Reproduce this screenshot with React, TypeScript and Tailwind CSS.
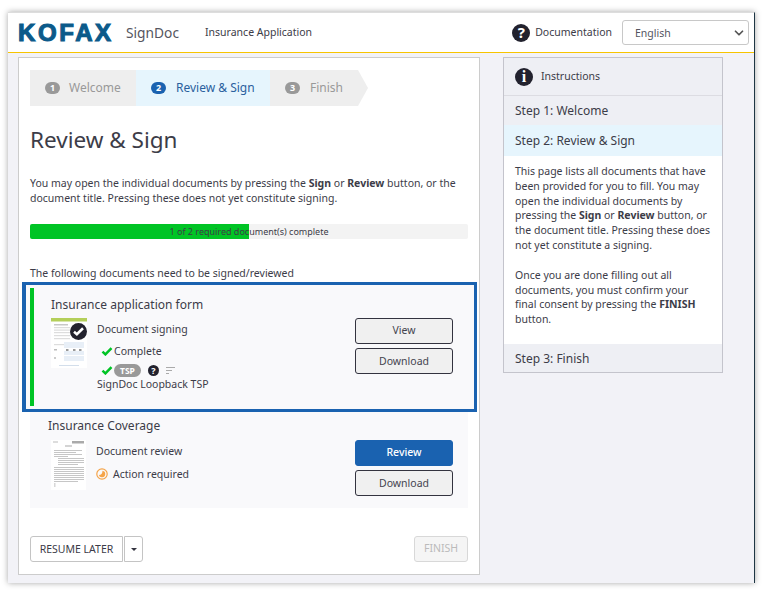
import { ChevronDown } from 'lucide-react';

const font = { fontFamily: '"Noto Sans", "Open Sans", sans-serif' };

function NumberBadge({ n, active }: { n: number; active?: boolean }) {
  return (
    <span
      className={`flex h-[12px] w-[15px] items-center justify-center rounded-full text-[9px] font-bold leading-none text-white ${
        active ? 'bg-[#1a62b0]' : 'bg-[#999999]'
      }`}
    >
      {n}
    </span>
  );
}

function Check({ className }: { className: string }) {
  return (
    <svg viewBox="0 0 12 10" className={className}>
      <path d="M1 5.2 L4.2 8.2 L11 1.2" fill="none" stroke="#00c425" strokeWidth="2.8" />
    </svg>
  );
}

function Circle({ glyph, className }: { glyph: string; className: string }) {
  return (
    <span
      className={`flex items-center justify-center rounded-full bg-[#22222e] font-bold leading-none text-white ${className}`}
    >
      {glyph}
    </span>
  );
}

function FormThumb() {
  return (
    <svg viewBox="0 0 36 50" className="h-[50px] w-[36px] shrink-0 bg-white">
      <rect x="0" y="0" width="36" height="3.5" fill="#b4cf5a" />
      <rect x="3" y="6" width="14" height="1.5" fill="#c8c8c8" />
      {[9, 11.5, 14, 17, 20, 26].map((y) => (
        <rect key={y} x="3" y={y} width="16" height="1.2" fill="#dddddd" />
      ))}
      <rect x="13" y="24" width="20" height="6" fill="#e8eff7" />
      <rect x="13" y="33" width="20" height="4" fill="#e8eff7" />
      <rect x="13" y="38" width="20" height="5" fill="#e8eff7" />
      <rect x="15" y="31" width="2.5" height="2" fill="#999" />
      <rect x="22" y="31" width="2.5" height="2" fill="#999" />
      <rect x="28" y="31" width="2.5" height="2" fill="#999" />
      <rect x="3" y="31" width="3" height="1.5" fill="#bbb" />
      <rect x="3" y="39" width="2" height="2" fill="#ccc" />
      <rect x="8" y="47" width="20" height="1" fill="#d3deeb" />
    </svg>
  );
}

function ReviewThumb() {
  const lines = [
    [3, 10, 28], [3, 12, 22], [3, 14, 28], [3, 16, 14],
    [7, 18, 26], [7, 20, 26], [7, 22, 26], [7, 24, 20],
    [3, 27, 30], [3, 29, 30], [3, 31, 30], [3, 33, 30], [3, 35, 30], [3, 37, 30], [3, 39, 30], [3, 41, 24],
  ];
  return (
    <svg viewBox="0 0 35 50" className="h-[50px] w-[35px] shrink-0 bg-white">
      <rect x="2" y="1.5" width="5" height="1" fill="#bbb" />
      <rect x="21" y="1" width="12" height="2.5" fill="#aaa" />
      <rect x="14" y="5.5" width="7" height="1" fill="#aaa" />
      {lines.map(([x, y, w]) => (
        <rect key={`${x}-${y}`} x={x} y={y} width={w} height="1" fill="#c6c6c6" />
      ))}
      <rect x="3" y="43" width="1.5" height="4" fill="#d8d8d8" />
    </svg>
  );
}

function GrayButton({ label, className }: { label: string; className?: string }) {
  return (
    <button className={`h-[26px] w-[98px] rounded-[3px] border border-[#33333f] bg-[#f0f0f0] text-[10.5px] text-[#44444f] ${className ?? ''}`}>
      {label}
    </button>
  );
}

export default function App() {
  return (
    <div className="h-[591px] w-[763px] overflow-hidden bg-white pl-[8px] pt-[12px] text-[10.5px] leading-[15px] text-[#3c3c48]" style={font}>
      <div className="flex h-[571px] w-[747px] flex-col border-t border-r border-[#dddddd] border-r-[#1e3644] bg-[#f2f2f7] shadow-[0_0_6px_rgba(0,0,0,0.35)]">
        {/* 헤더 */}
        <header className="flex h-[40px] shrink-0 items-center border-b border-[#f7c400] bg-white pl-[10px] pr-[5px]">
          <span className="w-[95px] text-[24px] font-bold leading-none tracking-[2.6px] text-[#0b5a8a] [-webkit-text-stroke:1.1px_#0b5a8a]" style={{ fontFamily: '"Liberation Sans", sans-serif' }}>
            KOFAX
          </span>
          <span className="ml-[13px] text-[13.75px] text-[#555560]">SignDoc</span>
          <span className="ml-[26px]">Insurance Application</span>
          <Circle glyph="?" className="ml-auto h-[18px] w-[18px] text-[15px]" />
          <span className="ml-[5px]">Documentation</span>
          <div className="ml-[10px] flex h-[25px] w-[127px] items-center justify-between rounded-[3px] border border-[#c8c8c8] pl-[12px] pr-[2px] pt-[1px] text-[#55555f]">
            English
            <ChevronDown size={14} strokeWidth={3} className="text-[#555]" />
          </div>
        </header>

        <div className="flex items-start pl-[10px] pt-[4px]">
          {/* 본문 패널 */}
          <main className="flex h-[518px] w-[462px] shrink-0 flex-col border border-[#cccccc] bg-white px-[11px] pt-[12px]">
            <div className="flex h-[36px] w-[338px] items-stretch text-[12px]">
              <div className="flex w-[106px] items-center gap-[9px] bg-[#eeeeee] pb-[1px] pl-[15px] text-[#999999]">
                <NumberBadge n={1} />
                Welcome
              </div>
              <div className="flex w-[134px] items-center gap-[10px] bg-[#e6f5fd] pb-[1px] pl-[15px] text-[#2a5f9e]">
                <NumberBadge n={2} active />
                Review &amp; Sign
              </div>
              <div className="flex w-[98px] items-center gap-[10px] bg-[#eeeeee] pb-[1px] pl-[15px] text-[#999999] [clip-path:polygon(0_0,88px_0,98px_50%,88px_100%,0_100%)]">
                <NumberBadge n={3} />
                Finish
              </div>
            </div>

            <h1 className="mt-[17px] text-[22.5px] leading-[34px]">Review &amp; Sign</h1>
            <p className="mt-[19px] w-[438px]">
              You may open the individual documents by pressing the <b>Sign</b> or <b>Review</b> button, or the document title. Pressing these does not yet constitute signing.
            </p>

            <div className="relative mt-[18px] h-[15px] w-[438px] overflow-hidden rounded-[2px] bg-[#f3f3f3]">
              <div className="h-full w-1/2 bg-[#00c425]" />
              <span className="absolute inset-0 text-center text-[9px] leading-[15px]">1 of 2 required document(s) complete</span>
            </div>

            <p className="mt-[27px]">The following documents need to be signed/reviewed</p>

            {/* 강조된 문서 카드 */}
            <div className="-mx-[8px] mt-[1px] h-[130px] w-[455px] shrink-0 border-[3px] border-l-4 border-[#1a62b0] bg-[#f9f9fb] pl-[4px] pt-[3px]">
              <div className="flex h-[118px] w-[438px]">
                <div className="w-[4px] bg-[#00c425]" />
                <div className="relative flex-1 pl-[17px] pt-[8px]">
                  <h2 className="text-[12px] leading-[18px]">Insurance application form</h2>
                  <div className="mt-[4px] flex">
                    <div className="relative">
                      <FormThumb />
                      <span className="absolute left-[19px] top-[5px] flex h-[17px] w-[17px] items-center justify-center rounded-full bg-[#22222e]">
                        <svg viewBox="0 0 12 10" className="h-[9px] w-[11px]">
                          <path d="M1 5.2 L4.2 8 L11 1.4" fill="none" stroke="white" strokeWidth="2.8" />
                        </svg>
                      </span>
                    </div>
                    <div className="ml-[10px] flex-1 pt-[3px]">
                      <div className="leading-[16px]">Document signing</div>
                      <div className="mt-[6px] flex items-center pl-[4px] leading-[16px]">
                        <Check className="h-[9px] w-[12px]" />
                        <span className="ml-[1px]">Complete</span>
                      </div>
                      <div className="mt-[4px] flex h-[14px] items-center pl-[4px]">
                        <Check className="h-[9px] w-[12px]" />
                        <span className="ml-[1px] rounded-full bg-[#999999] px-[6px] text-[8.5px] font-bold leading-[13px] text-white">TSP</span>
                        <Circle glyph="?" className="ml-[7px] h-[11px] w-[11px] text-[9px]" />
                        <svg viewBox="0 0 9 7" className="ml-[7px] h-[7px] w-[9px]">
                          <path d="M0 .5h9M0 3.5h6M0 6.5h3" stroke="#aaa" strokeWidth="1" />
                        </svg>
                      </div>
                      <div className="leading-[15px]">SignDoc Loopback TSP</div>
                    </div>
                  </div>
                  <div className="absolute left-[321px] top-[30px] flex flex-col gap-[4px]">
                    <GrayButton label="View" className="pb-[2px]" />
                    <GrayButton label="Download" />
                  </div>
                </div>
              </div>
            </div>

            <div className="relative h-[96px] w-[438px] shrink-0 bg-[#f9f9fb] pl-[18px] pt-[5px]">
              <h2 className="text-[12px] leading-[18px]">Insurance Coverage</h2>
              <div className="mt-[5px] flex pl-[3px]">
                <ReviewThumb />
                <div className="ml-[10px] pt-[3px]">
                  <div className="leading-[16px]">Document review</div>
                  <div className="mt-[7px] flex items-center gap-[5px] leading-[16px]">
                    <svg viewBox="0 0 12 12" className="h-[12px] w-[12px]">
                      <circle cx="6" cy="6" r="5.2" fill="none" stroke="#f5a449" strokeWidth="1.2" />
                      <path d="M6.5 2.8 A3.3 3.3 0 1 1 2.8 7 Q6.5 7 6.5 2.8 Z" fill="#f5a449" />
                    </svg>
                    Action required
                  </div>
                </div>
              </div>
              <div className="absolute left-[325px] top-[28px] flex flex-col gap-[4px]">
                <button className="h-[26px] w-[98px] rounded-[3px] border border-[#1a62b0] bg-[#1a62b0] pb-[2px] text-[10.5px] font-medium text-white">Review</button>
                <GrayButton label="Download" />
              </div>
            </div>

            <div className="mt-[28px] flex w-[438px] items-start">
              <button className="h-[26px] w-[93px] rounded-l-[3px] border border-[#c4c4c4] text-[10.5px] text-[#3c3c48]">RESUME LATER</button>
              <button className="ml-[1px] flex h-[26px] w-[19px] items-center justify-center rounded-r-[3px] border border-[#c4c4c4]">
                <span className="h-0 w-0 border-x-[3px] border-t-[3px] border-x-transparent border-t-[#33333f]" />
              </button>
              <button className="ml-auto h-[26px] w-[54px] rounded-[3px] border border-[#d8d8d8] bg-[#f5f5f5] pb-[2px] text-[10.5px] text-[#bbbbbb]">FINISH</button>
            </div>
          </main>

          {/* 안내 패널 */}
          <aside className="ml-[23px] w-[220px] shrink-0 border border-[#c4c4cc] bg-[#eeeff4]">
            <div className="flex h-[38px] items-center border-b border-[#dcdce2] pl-[11px]">
              <Circle glyph="i" className="h-[18px] w-[18px] font-['Liberation_Serif'] text-[16px]" />
              <span className="ml-[8px]">Instructions</span>
            </div>
            <div className="flex h-[29px] items-center pl-[11px] text-[12px]">Step 1: Welcome</div>
            <div className="flex h-[31px] items-center bg-[#e6f5fd] pl-[11px] text-[12px]">Step 2: Review &amp; Sign</div>
            <div className="h-[188px] bg-white px-[11px] pt-[8px] leading-[14.8px]">
              <p>
                This page lists all documents that have been provided for you to fill. You may open the individual documents by pressing the <b>Sign</b> or <b>Review</b> button, or the document title. Pressing these does not yet constitute a signing.
              </p>
              <p className="mt-[15px]">
                Once you are done filling out all documents, you must confirm your final consent by pressing the <b>FINISH</b> button.
              </p>
            </div>
            <div className="flex h-[28px] items-center pl-[11px] text-[12px]">Step 3: Finish</div>
          </aside>
        </div>
      </div>
    </div>
  );
}
